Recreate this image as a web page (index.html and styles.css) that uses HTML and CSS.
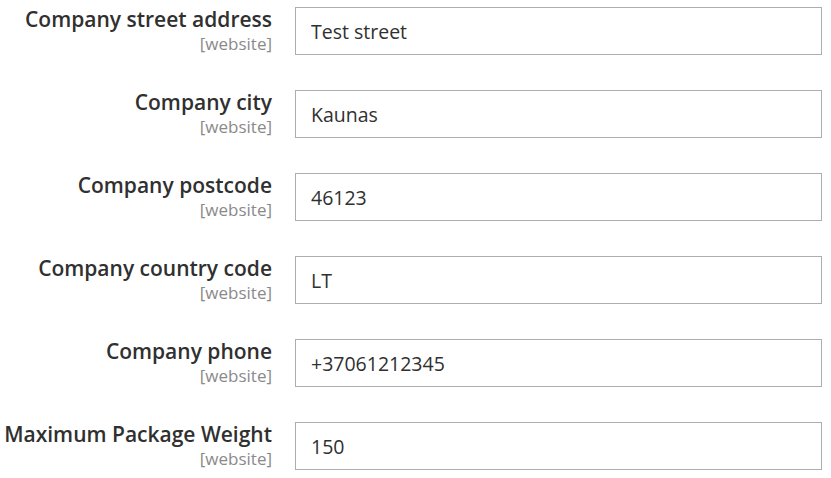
FILE: index.html
```html
<!DOCTYPE html>
<html lang="en">

<head>
    <meta charset="UTF-8">
    <meta name="viewport" content="width=device-width, initial-scale=1.0">
    <title>Shipping Settings</title>
    <link rel="stylesheet" href="styles.css">
</head>

<body>

    <div class="config-form">
        <div class="field-row">
            <label class="field-label" for="street">
                <span class="label-text">Company street address</span>
                <span class="scope-label">[website]</span>
            </label>
            <input class="field-input" id="street" type="text" value="Test street">
        </div>
        <div class="field-row">
            <label class="field-label" for="city">
                <span class="label-text">Company city</span>
                <span class="scope-label">[website]</span>
            </label>
            <input class="field-input" id="city" type="text" value="Kaunas">
        </div>
        <div class="field-row">
            <label class="field-label" for="postcode">
                <span class="label-text">Company postcode</span>
                <span class="scope-label">[website]</span>
            </label>
            <input class="field-input" id="postcode" type="text" value="46123">
        </div>
        <div class="field-row">
            <label class="field-label" for="country">
                <span class="label-text">Company country code</span>
                <span class="scope-label">[website]</span>
            </label>
            <input class="field-input" id="country" type="text" value="LT">
        </div>
        <div class="field-row">
            <label class="field-label" for="phone">
                <span class="label-text">Company phone</span>
                <span class="scope-label">[website]</span>
            </label>
            <input class="field-input" id="phone" type="text" value="+37061212345">
        </div>
        <div class="field-row">
            <label class="field-label" for="weight">
                <span class="label-text">Maximum Package Weight</span>
                <span class="scope-label">[website]</span>
            </label>
            <input class="field-input" id="weight" type="text" value="150">
        </div>
    </div>

</body>

</html>
```

FILE: styles.css
```css
body,
html {
    margin: 0;
    background-color: #fff;
    font-family: "Open Sans", Arial, sans-serif;
    color: #303030;
}

.config-form {
    display: flex;
    flex-direction: column;
    gap: 35px;
    padding-top: 7px;
}

.field-row {
    display: grid;
    grid-template-columns: 272px 527px;
    column-gap: 23px;
    align-items: start;
}

.field-label {
    display: flex;
    flex-direction: column;
    align-items: flex-end;
    text-align: right;
}

.label-text {
    font-size: 21px;
    font-weight: 600;
    line-height: 24px;
    white-space: nowrap;
}

.scope-label {
    font-size: 17px;
    line-height: 21px;
    color: #8a8a8a;
    margin-top: 2px;
}

.field-input {
    height: 48px;
    box-sizing: border-box;
    margin: 0;
    padding: 0 15px;
    border: 1px solid #adadad;
    border-radius: 0;
    background-color: #fff;
    font-family: inherit;
    font-size: 19.5px;
    color: #303030;
    outline: none;
}
```
